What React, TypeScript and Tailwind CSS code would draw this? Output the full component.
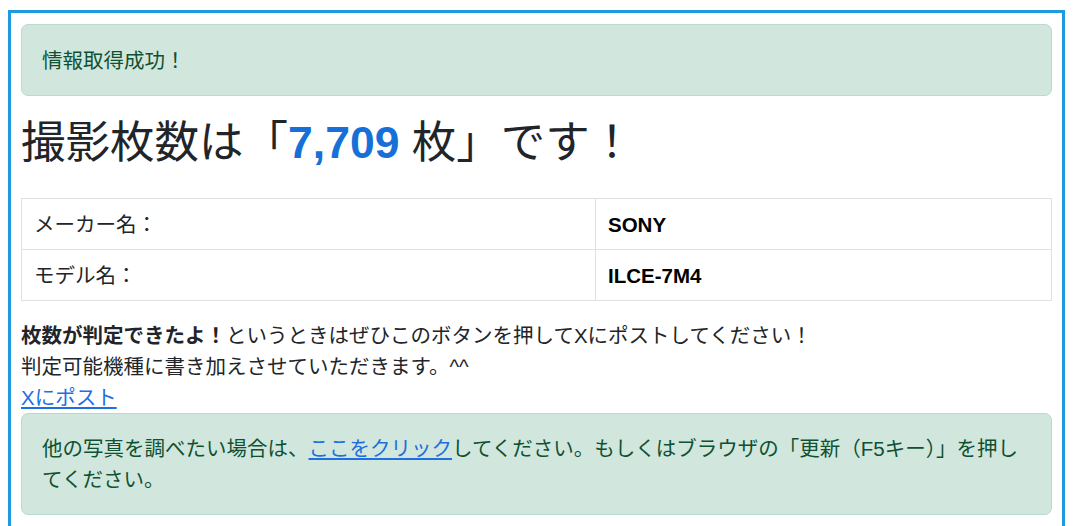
const font = { fontFamily: '"Liberation Sans", "Noto Sans CJK JP", sans-serif' };

export default function App() {
  return (
    <div className="min-h-screen bg-white pt-[10px] pl-[8px]" style={font}>
      <div className="w-[1057px] border-[3px] border-[#1e9be0] px-[10px] pt-[11px] pb-[40px] text-[20.5px] leading-[31px] text-[#212529]">
        <div className="rounded-[7px] border border-[#badbcc] bg-[#d1e7dd] px-[20px] py-[19.5px] text-[#0f5132]">
          情報取得成功！
        </div>

        <h2 className="mt-[21px] mb-[29px] text-[44.5px] leading-[52px] font-normal text-[#212529]">
          撮影枚数は「<span className="font-bold text-[#1670d8]">7,709</span> 枚」です！
        </h2>

        <table className="w-full border-collapse">
          <tbody>
            <tr>
              <td className="w-[574px] border border-[#dee2e6] px-[12px] py-[9.5px]">メーカー名：</td>
              <td className="border border-[#dee2e6] px-[12px] py-[9.5px] font-bold text-black">SONY</td>
            </tr>
            <tr>
              <td className="border border-[#dee2e6] px-[12px] py-[9.5px]">モデル名：</td>
              <td className="border border-[#dee2e6] px-[12px] py-[9.5px] font-bold text-black">ILCE-7M4</td>
            </tr>
          </tbody>
        </table>

        <p className="mt-[19px]">
          <b>枚数が判定できたよ！</b>というときはぜひこのボタンを押してXにポストしてください！
          <br />
          判定可能機種に書き加えさせていただきます。^^
          <br />
          <a href="#" className="text-[#1f6fe0] underline">Xにポスト</a>
        </p>

        <div className="rounded-[7px] border border-[#badbcc] bg-[#d1e7dd] px-[20px] py-[19px] text-[#0f5132]">
          他の写真を調べたい場合は、<a href="#" className="text-[#1f6fe0] underline">ここをクリック</a>してください。もしくはブラウザの「更新（F5キー）」を押してください。
        </div>
      </div>
    </div>
  );
}
